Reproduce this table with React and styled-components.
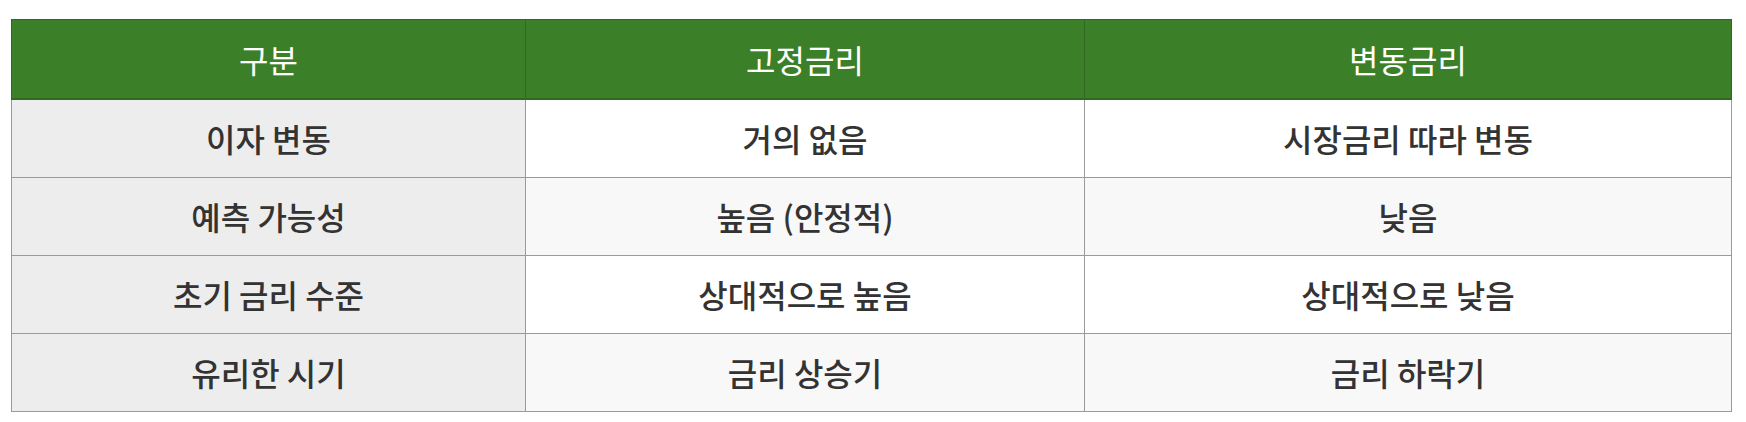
import React from "react";
import styled, { createGlobalStyle } from "styled-components";

const Global = createGlobalStyle`
  html, body { margin: 0; padding: 0; background: #ffffff; }
  body { font-family: "Noto Sans CJK KR", "Noto Sans", sans-serif; }
`;

const Page = styled.div`
  padding: 19px 15px 12px 11px;
`;

const Table = styled.table`
  width: 1720px;
  border-collapse: collapse;
  table-layout: fixed;
  font-size: 32px;
  line-height: 1.2;
  color: #333333;
`;

const HeadCell = styled.th`
  height: 78px;
  padding: 0 12px;
  background: #3b7f28;
  color: #ffffff;
  font-weight: 400;
  text-align: center;
  border: 1px solid #2f6a20;
  border-bottom-width: 2px;
`;

const Cell = styled.td`
  height: 77px;
  padding: 0 12px;
  text-align: center;
  font-weight: 500;
  border: 1px solid #9a9a9a;
  background: ${(p) => (p.$label ? "#ededed" : p.$alt ? "#f8f8f8" : "#ffffff")};
`;

const columns = [
  { title: "구분", width: 514 },
  { title: "고정금리", width: 559 },
  { title: "변동금리", width: 647 },
];

const rows = [
  ["이자 변동", "거의 없음", "시장금리 따라 변동"],
  ["예측 가능성", "높음 (안정적)", "낮음"],
  ["초기 금리 수준", "상대적으로 높음", "상대적으로 낮음"],
  ["유리한 시기", "금리 상승기", "금리 하락기"],
];

export default function App() {
  return (
    <>
      <Global />
      <Page>
        <Table>
          <colgroup>
            {columns.map((c) => (
              <col key={c.title} style={{ width: c.width }} />
            ))}
          </colgroup>
          <thead>
            <tr>
              {columns.map((c) => (
                <HeadCell key={c.title}>{c.title}</HeadCell>
              ))}
            </tr>
          </thead>
          <tbody>
            {rows.map((r, i) => (
              <tr key={r[0]}>
                {r.map((v, j) => (
                  <Cell key={j} $label={j === 0} $alt={i % 2 === 1}>
                    {v}
                  </Cell>
                ))}
              </tr>
            ))}
          </tbody>
        </Table>
      </Page>
    </>
  );
}
